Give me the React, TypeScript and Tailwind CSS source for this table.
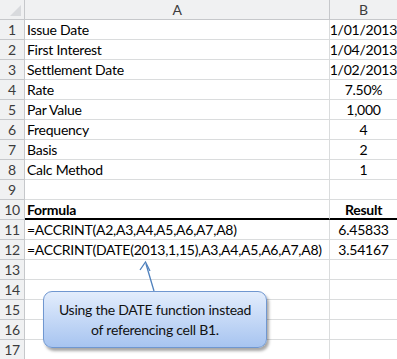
import React from "react";

type Row = { n: number; a: string; b: string; bold?: boolean; thick?: boolean };

const rows: Row[] = [
  { n: 1, a: "Issue Date", b: "1/01/2013" },
  { n: 2, a: "First Interest", b: "1/04/2013" },
  { n: 3, a: "Settlement Date", b: "1/02/2013" },
  { n: 4, a: "Rate", b: "7.50%" },
  { n: 5, a: "Par Value", b: "1,000" },
  { n: 6, a: "Frequency", b: "4" },
  { n: 7, a: "Basis", b: "2" },
  { n: 8, a: "Calc Method", b: "1" },
  { n: 9, a: "", b: "" },
  { n: 10, a: "Formula", b: "Result", bold: true, thick: true },
  { n: 11, a: "=ACCRINT(A2,A3,A4,A5,A6,A7,A8)", b: "6.45833" },
  { n: 12, a: "=ACCRINT(DATE(2013,1,15),A3,A4,A5,A6,A7,A8)", b: "3.54167" },
  { n: 13, a: "", b: "" },
  { n: 14, a: "", b: "" },
  { n: 15, a: "", b: "" },
  { n: 16, a: "", b: "" },
  { n: 17, a: "", b: "" },
];

export default function App() {
  return (
    <div
      className="relative w-[397px] h-[359px] overflow-hidden bg-white text-[14px] tracking-[-0.25px] text-black"
      style={{ fontFamily: "Lato, 'Open Sans', sans-serif" }}
    >
      {/* column headers */}
      <div className="flex h-[20px] bg-[#f0f1f2] text-[#3c3c3c]">
        <div className="relative w-[25px] h-full border-r border-b border-[#c6c8cb]">
          <div className="absolute right-[3px] bottom-[3px] w-0 h-0 border-l-[11px] border-l-transparent border-b-[11px] border-b-[#d8dadd]" />
        </div>
        <div className="w-[305px] h-full border-r border-b border-[#c6c8cb] flex items-center justify-center">A</div>
        <div className="flex-1 h-full border-b border-[#c6c8cb] flex items-center justify-center">B</div>
      </div>

      {rows.map((r) => (
        <div key={r.n} className="flex h-[20px]">
          <div className="w-[25px] h-full bg-[#f0f1f2] text-[#3c3c3c] border-r border-b border-[#c6c8cb] flex items-center justify-center">
            {r.n}
          </div>
          <div
            className={`w-[305px] h-full border-r border-[#dadcdd] flex items-center pl-[2px] whitespace-nowrap ${
              r.thick ? "border-b-2 border-b-black" : "border-b"
            } ${r.bold ? "font-bold" : ""}`}
          >
            {r.a}
          </div>
          <div
            className={`flex-1 h-full border-[#dadcdd] flex items-center justify-center whitespace-nowrap ${
              r.thick ? "border-b-2 border-b-black" : "border-b"
            } ${r.bold ? "font-bold" : ""}`}
          >
            {r.b}
          </div>
        </div>
      ))}

      {/* callout arrow */}
      <svg className="absolute left-0 top-0" width="397" height="359">
        <line x1="154" y1="291" x2="146" y2="264" stroke="#4f81bd" strokeWidth="1.3" />
        <polyline points="140,270 145.5,262 150,271" fill="none" stroke="#4f81bd" strokeWidth="1.3" />
      </svg>

      {/* callout box */}
      <div className="absolute left-[43px] top-[291px] w-[224px] h-[57px] rounded-[9px] border border-[#7097d0] bg-gradient-to-b from-[#e3edfc] to-[#a7c4f0] shadow-[2px_3px_3px_rgba(0,0,0,0.35)] flex flex-col items-center justify-center leading-[20px] text-[14px] text-[#111]">
        <div>Using the DATE function instead</div>
        <div>of referencing cell B1.</div>
      </div>
    </div>
  );
}
